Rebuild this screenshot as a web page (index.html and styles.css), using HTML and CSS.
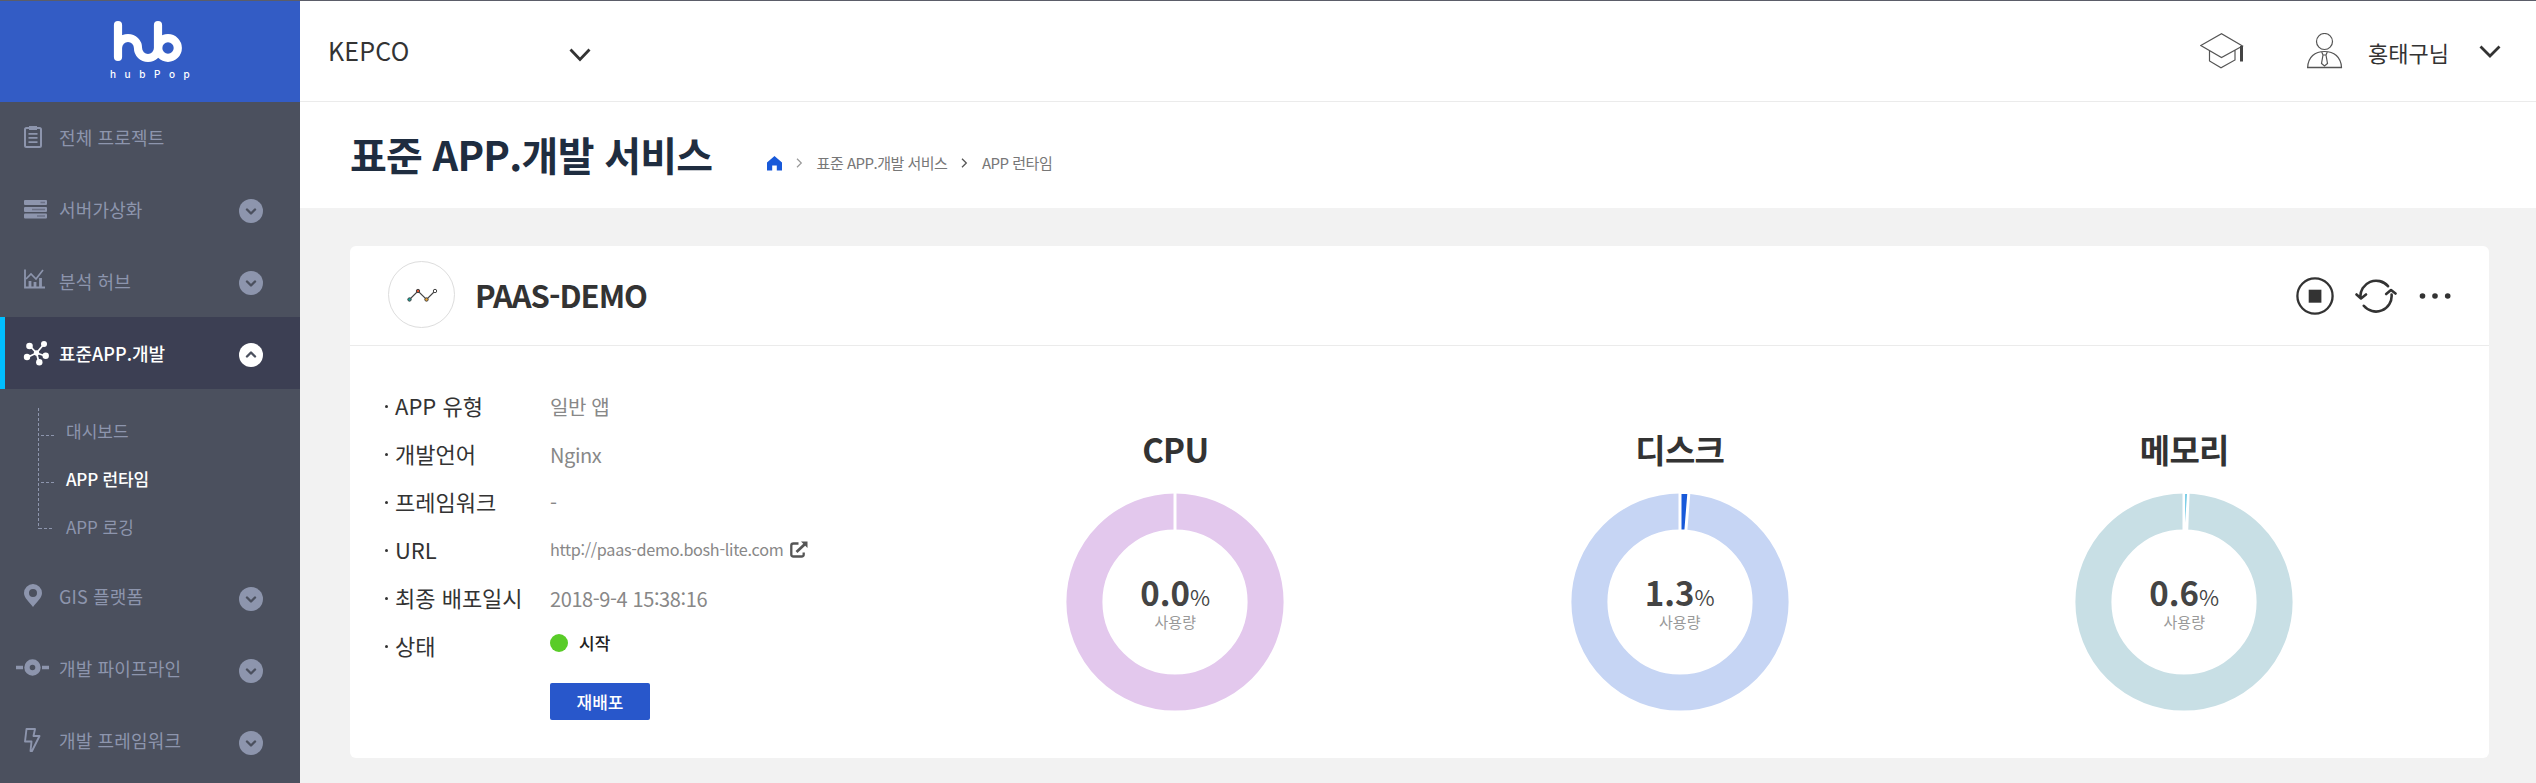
FILE: index.html
```html
<!DOCTYPE html>
<html lang="ko">
<head>
<meta charset="utf-8">
<title>hubPop</title>
<link rel="stylesheet" href="styles.css">
</head>
<body>
<div class="app">
  <aside class="sidebar">
    <div class="logo">
      <svg class="logo-mark" width="70" height="44" viewBox="0 0 70 44" fill="none" stroke="#fff" stroke-width="8.2" stroke-linecap="round"><path d="M5 6V38M5 29a10 10 0 0 1 20 0a10 10 0 0 0 20 0V6"/><circle cx="55" cy="29" r="9.8"/></svg>
      <div class="logo-text">hubPop</div>
    </div>
    <nav class="menu">
      <a class="item"><svg class="ico" width="34" height="26" viewBox="0 0 34 26"><rect x="9" y="4" width="16" height="19" rx="1.5" fill="none" stroke="currentColor" stroke-width="2"/><path d="M13 2h8v4h-8zM12.500 9h9v1.700h-9zM12.500 13h9v1.700h-9zM12.500 17.200h9v1.700h-9z" fill="currentColor"/></svg><span>전체 프로젝트</span></a>
      <a class="item"><svg class="ico" width="34" height="26" viewBox="0 0 34 26"><g fill="currentColor"><rect x="8" y="4" width="23" height="5" rx="1"/><rect x="8" y="11" width="23" height="5" rx="1"/><rect x="8" y="17.500" width="23" height="5" rx="1"/></g><path d="M24.500 6.500h4.500M16 13.500h13M21 20h8" stroke="#6b7186" stroke-width="1.500"/></svg><span>서버가상화</span><i class="toggle"><svg width="24" height="24" viewBox="0 0 24 24"><path d="M8 10.500l4 4 4-4"/></svg></i></a>
      <a class="item"><svg class="ico" width="34" height="26" viewBox="0 0 34 26" fill="none" stroke="currentColor"><path d="M9 1.500V19.500H29" stroke-width="1.800"/><path d="M10 11l5-5 5 5 7-9" stroke-width="1.700"/><path d="M14 19v-6M19 19v-5M24.500 19v-9" stroke-width="2.800"/></svg><span>분석 허브</span><i class="toggle"><svg width="24" height="24" viewBox="0 0 24 24"><path d="M8 10.500l4 4 4-4"/></svg></i></a>
      <a class="item on"><svg class="ico" width="34" height="26" viewBox="0 0 34 26"><path d="M20.500 13L14 6M20.500 13L28 4M20.500 13l9 3M20.500 13L23 22.500M20.500 13l-9.500 4.500" stroke="currentColor" stroke-width="1.800"/><g fill="currentColor"><circle cx="20.500" cy="13" r="2.700"/><circle cx="13.500" cy="6" r="3.300"/><circle cx="28" cy="4" r="3"/><circle cx="29.700" cy="15.800" r="3.200"/><circle cx="23.300" cy="22.300" r="3.200"/><circle cx="11" cy="17" r="3.200"/></g></svg><span>표준APP.개발</span><i class="toggle"><svg width="24" height="24" viewBox="0 0 24 24"><path d="M8 13.500l4-4 4 4"/></svg></i></a>
      <div class="submenu">
        <svg class="tree" width="18" height="124" viewBox="0 0 18 124" fill="none" stroke="#8d95ad" stroke-dasharray="3 2"><path d="M1.500 0V121M4 27.500H17M4 74.500H17M2 120.500H17"/></svg>
        <div class="sublist"><a>대시보드</a><a class="cur">APP 런타임</a><a>APP 로깅</a></div>
      </div>
      <a class="item"><svg class="ico" width="34" height="26" viewBox="0 0 34 26"><path fill="currentColor" fill-rule="evenodd" d="M17 1a9 9 0 0 1 9 9c0 5-5 8.500-9 14c-4-5.500-9-9-9-14a9 9 0 0 1 9-9zM17 6a4 4 0 1 0 0 8a4 4 0 0 0 0-8z"/></svg><span>GIS 플랫폼</span><i class="toggle low"><svg width="24" height="24" viewBox="0 0 24 24"><path d="M8 10.500l4 4 4-4"/></svg></i></a>
      <a class="item"><svg class="ico" width="34" height="26" viewBox="0 0 34 26" fill="none" stroke="currentColor"><circle cx="16.500" cy="12.500" r="5.500" stroke-width="5.400"/><path d="M0 12.500h7M26 12.500h7" stroke-width="3.600"/></svg><span>개발 파이프라인</span><i class="toggle low"><svg width="24" height="24" viewBox="0 0 24 24"><path d="M8 10.500l4 4 4-4"/></svg></i></a>
      <a class="item"><svg class="ico" width="34" height="26" viewBox="0 0 34 26" fill="none" stroke="currentColor" stroke-width="1.900" stroke-linejoin="round"><path d="M10.500 2h8.500l-1.500 7h6L16 24h-1.500l1-9.500H9z"/></svg><span>개발 프레임워크</span><i class="toggle low"><svg width="24" height="24" viewBox="0 0 24 24"><path d="M8 10.500l4 4 4-4"/></svg></i></a>
    </nav>
  </aside>
  <main class="main">
    <header class="topbar">
      <span class="org">KEPCO</span>
      <svg class="chev" width="24" height="16" viewBox="0 0 24 16"><path d="M2.500 2.500L12 12.500L21.500 2.500"/></svg>
      <svg class="cap" width="44" height="36" viewBox="0 0 44 36" fill="none" stroke="#555" stroke-width="1.200"><path d="M.8 12.500L21.500.8L42.500 13L21.500 24.500ZM9.500 17.500V28L21 34.800L35 27V17.500"/><path d="M41.500 13V28.500" stroke="#444" stroke-width="3"/></svg>
      <svg class="user" width="36" height="36" viewBox="0 0 36 36" fill="none" stroke="#555" stroke-width="1.200"><circle cx="17.500" cy="8.500" r="8"/><path d="M.7 34.500C1 24 8 18.500 17.500 18.500S34 24 34.500 34.500ZM14.500 18.500l1.500 3.500h3l1.500-3.500M16 22l-1.500 8.500l3 2.500l3-2.500L19 22"/><path d="M0 34.500H35" stroke-width="1.600"/></svg>
      <span class="uname">홍태구님</span>
      <svg class="chev" width="24" height="16" viewBox="0 0 24 16"><path d="M2.500 2.500L12 12L21.500 2.500"/></svg>
    </header>
    <section class="titlebar">
      <h1>표준 APP.개발 서비스</h1>
      <div class="crumbs">
        <svg class="home" width="15" height="15" viewBox="0 0 15 15"><path fill="#1859d9" d="M7.500 0L15 6.500V14.500H9.800V9.500H5.200V14.500H0V6.500Z"/></svg>
        <svg class="sep" width="7" height="10" viewBox="0 0 7 10"><path d="M1 .8L5.300 5L1 9.200" stroke="#999" stroke-width="1.200"/></svg>
        <span class="c1">표준 APP.개발 서비스</span>
        <svg class="sep" width="7" height="10" viewBox="0 0 7 10"><path d="M1 .8L5.300 5L1 9.200" stroke="#555" stroke-width="1.300"/></svg>
        <span class="c2">APP 런타임</span>
      </div>
    </section>
    <section class="card">
      <div class="card-head">
        <div class="badge"><svg width="32" height="16" viewBox="0 0 32 16" stroke="#444" fill="none"><path d="M3.500 12.500L12 4L20.500 12.500L29 4" stroke-width="1.200"/><circle cx="3.500" cy="12.500" r="1.700" fill="#17a398"/><circle cx="12" cy="4" r="1.700" fill="#d9502e"/><circle cx="20.500" cy="12.500" r="1.700" fill="#efa52c"/><circle cx="29" cy="4" r="1.700" fill="#fff"/></svg></div>
        <h2>PAAS-DEMO</h2>
        <div class="actions">
          <svg width="38" height="38" viewBox="0 0 38 38"><circle cx="19" cy="19" r="17.600" fill="none" stroke="#333" stroke-width="2.300"/><path d="M12.700 12.700h12.700v13h-12.700z" fill="#333"/></svg>
          <svg width="42" height="36" viewBox="0 0 42 36" fill="none" stroke="#333" stroke-width="2.600" stroke-linecap="round" stroke-linejoin="round"><path d="M33 8.200A15.700 15.700 0 0 0 5.400 19.500M1.500 16.500L6 20.500L11 16.500"/><path d="M8.800 27.800A15.700 15.700 0 0 0 36.600 16.500M31.200 16L36 12L40.500 15.500"/></svg>
          <svg class="more" width="32" height="8" viewBox="0 0 32 8" fill="#333"><circle cx="3.500" cy="4" r="2.800"/><circle cx="16" cy="4" r="2.800"/><circle cx="28.700" cy="4" r="2.800"/></svg>
        </div>
      </div>
      <div class="card-body">
        <dl class="info">
          <dt>APP 유형</dt><dd>일반 앱</dd>
          <dt>개발언어</dt><dd>Nginx</dd>
          <dt>프레임워크</dt><dd>-</dd>
          <dt>URL</dt><dd class="url">http://paas-demo.bosh-lite.com<svg width="18" height="17" viewBox="0 0 18 17" fill="none" stroke="#555"><path d="M8.500 2.500H3.500Q1.300 2.500 1.300 4.500V13.500Q1.300 15.500 3.500 15.500H11.500Q13.700 15.500 13.700 13.500V11.500" stroke-width="2.300"/><path d="M6.500 11L15 3" stroke-width="2.700"/><path d="M11 .5h6.500V7z" fill="#555" stroke="none"/></svg></dd>
          <dt>최종 배포일시</dt><dd>2018-9-4 15:38:16</dd>
          <dt>상태</dt><dd class="state"><i class="dot"></i>시작</dd>
          <dd class="act"><button class="btn">재배포</button></dd>
        </dl>
        <div class="charts">
          <figure class="chart"><h3>CPU</h3><div class="ring"><svg width="220" height="220" viewBox="-110 -110 220 220"><circle r="90.600" fill="none" stroke="#e3c8ed" stroke-width="36"/><path d="M0-110V-71" stroke="#fff" stroke-width="3"/></svg><div class="val"><p><b>0.0</b><span>%</span></p><small>사용량</small></div></div></figure>
          <figure class="chart"><h3>디스크</h3><div class="ring"><svg width="220" height="220" viewBox="-110 -110 220 220"><circle r="90.600" fill="none" stroke="#c6d5f4" stroke-width="36"/><path d="M0-109.500V-71L5.800-71L8.900-109.500Z" fill="#1859d9" stroke="#fff" stroke-width="3"/></svg><div class="val"><p><b>1.3</b><span>%</span></p><small>사용량</small></div></div></figure>
          <figure class="chart"><h3>메모리</h3><div class="ring"><svg width="220" height="220" viewBox="-110 -110 220 220"><circle r="90.600" fill="none" stroke="#c8dfe5" stroke-width="36"/><path d="M0-109.500V-71L2.700-71L4.100-109.500Z" fill="#00a0d0" stroke="#fff" stroke-width="3"/></svg><div class="val"><p><b>0.6</b><span>%</span></p><small>사용량</small></div></div></figure>
        </div>
      </div>
    </section>
  </main>
</div>
</body>
</html>
```
FILE: styles.css
```css
* { box-sizing: border-box; margin: 0; padding: 0; }
body { font-family: "Noto Sans CJK KR", sans-serif; color: #333; background: #f2f2f2; }
i { font-style: normal; }
svg { display: block; flex: none; }
.app { display: flex; height: 783px; overflow: hidden; border-top: 1px solid #5b5d69; }

.sidebar { width: 300px; flex: none; background: #4b505e; }
.logo { height: 101px; background: #335cc5; padding: 18px 0 0 113px; }
.logo-text { margin: 4px 0 0 -3px; font: 500 10px/14px Inter, sans-serif; letter-spacing: 8.6px; color: #fff; white-space: nowrap; }
.item { display: flex; align-items: center; height: 72px; padding-left: 16px; font-size: 18px; line-height: 26px; letter-spacing: .15px; color: #8d95ad; }
.menu { margin-top: -1px; }
.ico { margin-right: 9px; }
.toggle { margin: 4px 37px 0 auto; width: 24px; height: 24px; border-radius: 50%; background: #8d95ad; }
.toggle.low { margin-top: 6px; }
.toggle path { fill: none; stroke: #4b505e; stroke-width: 2.4; stroke-linecap: round; stroke-linejoin: round; }
.on { background: #3c3f53; color: #fff; font-weight: 500; letter-spacing: 0; border-left: 5px solid #00bfff; padding-left: 11px; }
.on .toggle { background: #fff; }
.submenu { display: flex; height: 171px; padding: 18px 0 0 37px; }
.tree { margin-top: 1px; }
.sublist { display: flex; flex-direction: column; margin-left: 11px; }
.sublist a { height: 48px; line-height: 48px; font-size: 17px; color: #8d95ad; }
.sublist .cur { color: #fff; font-weight: 500; letter-spacing: -.2px; }

.main { flex: 1; min-width: 0; }
.topbar { display: flex; align-items: center; height: 101px; background: #fff; border-bottom: 1px solid #ebebeb; padding: 0 34px 0 28px; }
.org { width: 240px; margin-top: -2px; font-size: 25px; line-height: 36px; letter-spacing: .2px; }
.chev path { fill: none; stroke: #333; stroke-width: 2.8; }
.topbar > .chev { margin-top: 8px; }
.cap { margin-left: auto; }
.user { margin-left: 63px; }
.uname { margin: 1px 29px 0 25px; font-size: 22px; line-height: 32px; }
.topbar > .uname + .chev { margin-top: 2px; }
.titlebar { display: flex; align-items: center; height: 106px; background: #fff; padding-left: 50px; }
h1 { width: 417px; margin-top: -2px; font-size: 40px; line-height: 58px; font-weight: 700; letter-spacing: -.75px; color: #1f2d40; white-space: nowrap; }
.crumbs { display: flex; align-items: center; font-size: 15px; line-height: 22px; color: #777; margin-top: 16px; }
.sep { fill: none; margin: 0 13.8px; }
.c1, .c2 { letter-spacing: -.5px; }

.card { margin: 38px 47px 0 50px; height: 512px; border-radius: 6px; background: #fff; }
.card-head { display: flex; align-items: center; height: 100px; border-bottom: 1px solid #ebebeb; padding: 0 38px 0 38px; }
.badge { width: 67px; height: 67px; margin-top: -2px; border: 1px solid #ddd; border-radius: 50%; display: flex; align-items: center; justify-content: center; }
h2 { margin: -2px 0 0 20px; font-size: 31px; line-height: 44px; font-weight: 700; letter-spacing: -1px; }
.actions { display: flex; align-items: center; gap: 21px; margin-left: auto; }
.more { margin-left: 1px; }
.card-body { display: flex; }
.info { display: grid; grid-template-columns: 164px 310px; grid-auto-rows: 48px; margin: 36px 0 0 36px; width: 474px; }
dt { font-size: 22px; line-height: 46px; padding-left: 9px; position: relative; }
dt::before { content: ""; position: absolute; left: -1px; top: 23px; width: 3px; height: 3px; border-radius: 50%; background: #333; }
dd { font-size: 20px; line-height: 50px; color: #888; letter-spacing: -.4px; }
.url { display: flex; align-items: center; gap: 7px; height: 46px; font-size: 16.2px; letter-spacing: -.3px; }
.state { display: flex; align-items: center; height: 41px; font-size: 17px; font-weight: 500; color: #222; letter-spacing: 0; }
.dot { width: 18px; height: 18px; border-radius: 50%; background: #59cc28; margin-right: 11px; }
.act { grid-column: 2; padding-top: 13px; line-height: 1; }
.btn { width: 100px; height: 37px; border: 0; border-radius: 2px; background: #2857cb; color: #fff; font: 500 17px/37px "Noto Sans CJK KR", sans-serif; }
.charts { display: flex; margin: 79px 0 0 63px; }
.chart { width: 504.5px; display: flex; flex-direction: column; align-items: center; }
h3 { font-size: 33px; line-height: 48px; font-weight: 700; letter-spacing: -.7px; }
.ring { display: grid; margin-top: 19px; }
.ring > * { grid-area: 1 / 1; }
.val { text-align: center; padding-top: 78px; }
.val p { line-height: 44px; color: #444; }
.val b { font-size: 33px; font-weight: 700; }
.val span { font-size: 22px; font-weight: 350; }
.val small { display: block; margin-top: -10px; font-size: 15px; line-height: 22px; color: #999; }
```
